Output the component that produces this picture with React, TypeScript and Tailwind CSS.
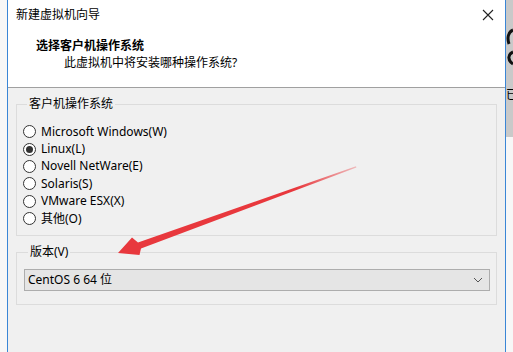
import React from 'react'

const font = { fontFamily: '"Noto Sans", "Noto Sans CJK SC", sans-serif' }

const options = [
  'Microsoft Windows(W)',
  'Linux(L)',
  'Novell NetWare(E)',
  'Solaris(S)',
  'VMware ESX(X)',
  '其他(O)',
]

function Radio({ label, checked }: { label: string; checked?: boolean }) {
  return (
    <div className="flex h-[17.4px] items-center gap-[5px]">
      <span className="flex h-[13px] w-[13px] items-center justify-center rounded-full border border-[#333] bg-white">
        {checked && <span className="h-[7px] w-[7px] rounded-full bg-[#333]" />}
      </span>
      <span className="text-[12px] leading-none text-black">{label}</span>
    </div>
  )
}

export default function App() {
  return (
    <div className="relative flex h-[352px] w-[513px] overflow-hidden bg-[#f6f6f6]" style={font}>
      <div className="w-[7px] bg-[#f7f7f7]" />

      <div className="flex w-[499px] flex-col border-x border-[#3a86d6] bg-[#f0f0f0]">
        {/* title bar */}
        <div className="flex h-[30px] items-center justify-between bg-white pl-2 pr-[9px]">
          <span className="text-[12px] text-black">新建虚拟机向导</span>
          <svg width="12" height="12" viewBox="0 0 12 12" className="mr-[2px]">
            <path d="M1 1 L11 11 M11 1 L1 11" stroke="#222" strokeWidth="1.1" />
          </svg>
        </div>

        {/* header */}
        <div className="flex h-[58px] flex-col border-b border-[#a0a0a0] bg-white pl-[28px] pt-[7px]">
          <span className="text-[12px] font-bold leading-[18px] text-black">选择客户机操作系统</span>
          <span className="pl-[28px] text-[12px] leading-[16px] text-black">此虚拟机中将安装哪种操作系统?</span>
        </div>

        {/* body */}
        <div className="flex flex-col px-2">
          <fieldset className="mt-[8px] w-[481px] border border-[#dcdcdc] pb-[8px] pl-[6px] pt-[11px]">
            <legend className="ml-[4px] px-[2px] text-[12px] leading-[16px] text-black">客户机操作系统</legend>
            {options.map((o, i) => (
              <Radio key={o} label={o} checked={i === 1} />
            ))}
          </fieldset>

          <fieldset className="mt-[8px] w-[481px] border border-[#dcdcdc] pb-[13px] pl-[7px] pr-[6px] pt-[9px]">
            <legend className="ml-[4px] px-[2px] text-[12px] leading-[16px] text-black">版本(V)</legend>
            <div className="flex h-[22px] items-center justify-between border border-[#adadad] bg-[#e5e5e5] pl-[3px] pr-[6px]">
              <span className="text-[12px] text-black">CentOS 6 64 位</span>
              <svg width="10" height="6" viewBox="0 0 10 6">
                <path d="M1 1 L5 5 L9 1" fill="none" stroke="#555" strokeWidth="1" />
              </svg>
            </div>
          </fieldset>
        </div>
      </div>

      <div className="flex w-[7px] flex-col">
        <div className="relative h-[137px] overflow-hidden bg-[#c9c9c9]">
          <svg width="7" height="137" viewBox="0 0 7 137" className="absolute left-0 top-0">
            <path d="M7 30 C2 32 1 38 3 44" fill="none" stroke="#111" strokeWidth="3" />
            <path d="M7 52 C2 54 1 60 7 64" fill="none" stroke="#111" strokeWidth="3" />
          </svg>
          <span className="absolute left-0 top-[89px] text-[12px] leading-none text-black">已</span>
        </div>
        <div className="flex-1 bg-[#f7f7f7]" />
      </div>

      {/* red annotation arrow */}
      <svg className="pointer-events-none absolute left-0 top-0" width="513" height="352" viewBox="0 0 513 352">
        <defs>
          <linearGradient id="fade" x1="356" y1="167" x2="118" y2="253" gradientUnits="userSpaceOnUse">
            <stop offset="0" stopColor="#e8383d" stopOpacity="0.3" />
            <stop offset="0.25" stopColor="#e8383d" stopOpacity="1" />
            <stop offset="1" stopColor="#e8383d" stopOpacity="1" />
          </linearGradient>
        </defs>
        <polygon
          points="356,166.3 138,242.6 132,237.5 118,253 139.5,255 141,248.4 356.4,167.4"
          fill="url(#fade)"
        />
      </svg>
    </div>
  )
}
